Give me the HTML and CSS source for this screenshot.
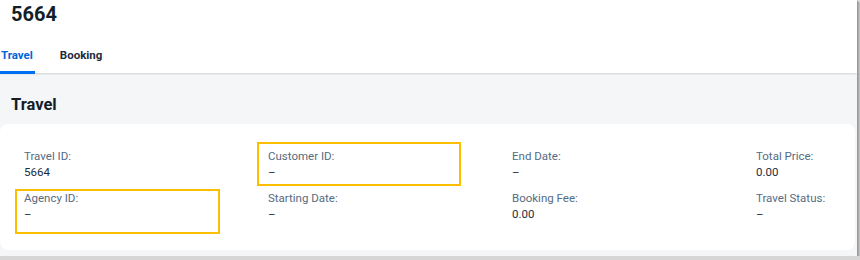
FILE: index.html
```html
<!DOCTYPE html>
<html lang="en">
<head>
  <meta charset="UTF-8">
  <meta name="viewport" content="width=device-width, initial-scale=1.0">
  <title>Travel 5664</title>
  <link rel="stylesheet" href="styles.css">
</head>
<body>
  <div class="page">
    <div class="header">
      <h1 class="title">5664</h1>
      <div class="tabs">
        <span class="tab active">Travel</span>
        <span class="tab">Booking</span>
      </div>
    </div>
    <div class="section">
      <h2 class="section-title">Travel</h2>
      <div class="card">
        <div class="fields">
          <div class="field"><div class="label">Travel ID:</div><div class="value">5664</div></div>
          <div class="field"><div class="label">Customer ID:</div><div class="value">–</div></div>
          <div class="field"><div class="label">End Date:</div><div class="value">–</div></div>
          <div class="field"><div class="label">Total Price:</div><div class="value">0.00</div></div>
          <div class="field"><div class="label">Agency ID:</div><div class="value">–</div></div>
          <div class="field"><div class="label">Starting Date:</div><div class="value">–</div></div>
          <div class="field"><div class="label">Booking Fee:</div><div class="value">0.00</div></div>
          <div class="field"><div class="label">Travel Status:</div><div class="value">–</div></div>
        </div>
        <div class="mark mark-customer"></div>
        <div class="mark mark-agency"></div>
      </div>
    </div>
  </div>
</body>
</html>
```

FILE: styles.css
```css
body { margin: 0; background: #d6d6d6; font-family: Roboto, "Liberation Sans", Arial, sans-serif; color: #1d2d3e; }
.page { width: 857px; height: 256px; background: #f5f6f7; overflow: hidden; box-shadow: 1px 1px 0 #999, 2px 2px 0 #ababab, 3px 3px 0 #c2c2c2; }

.header { background: #fff; height: 73px; box-shadow: 0 1px 2px rgba(0, 0, 0, 0.15); position: relative; }
.title { margin: 0; padding: 2px 11px 0; font-size: 20px; line-height: 24px; font-weight: bold; color: #131e29; }
.tabs { display: flex; gap: 24px; margin-top: 21px; }
.tab { font-size: 11.5px; font-weight: bold; line-height: 16px; padding: 0 1px 8px; border-bottom: 3px solid transparent; }
.tab.active { color: #0064d9; border-bottom-color: #0070f2; padding: 0 2px 8px 1px; }

.section { padding-top: 22px; }
.section-title { margin: 0 0 0 11px; font-size: 16.5px; line-height: 20px; font-weight: bold; color: #131e29; }
.card { position: relative; background: #fff; border-radius: 8px; margin: 9px 2px 0 0; height: 126px; box-sizing: border-box; padding: 24px 0 0 24px; }

.fields { display: grid; grid-template-columns: repeat(4, 244px); row-gap: 10px; }
.field { font-size: 11.5px; line-height: 16px; }
.label { color: #556b82; }
.value { color: #1d2d3e; }

.mark { position: absolute; border: 2px solid #fcbf00; box-sizing: border-box; }
.mark-customer { left: 257px; top: 18px; width: 204px; height: 44px; }
.mark-agency { left: 15px; top: 65px; width: 205px; height: 45px; }
```
